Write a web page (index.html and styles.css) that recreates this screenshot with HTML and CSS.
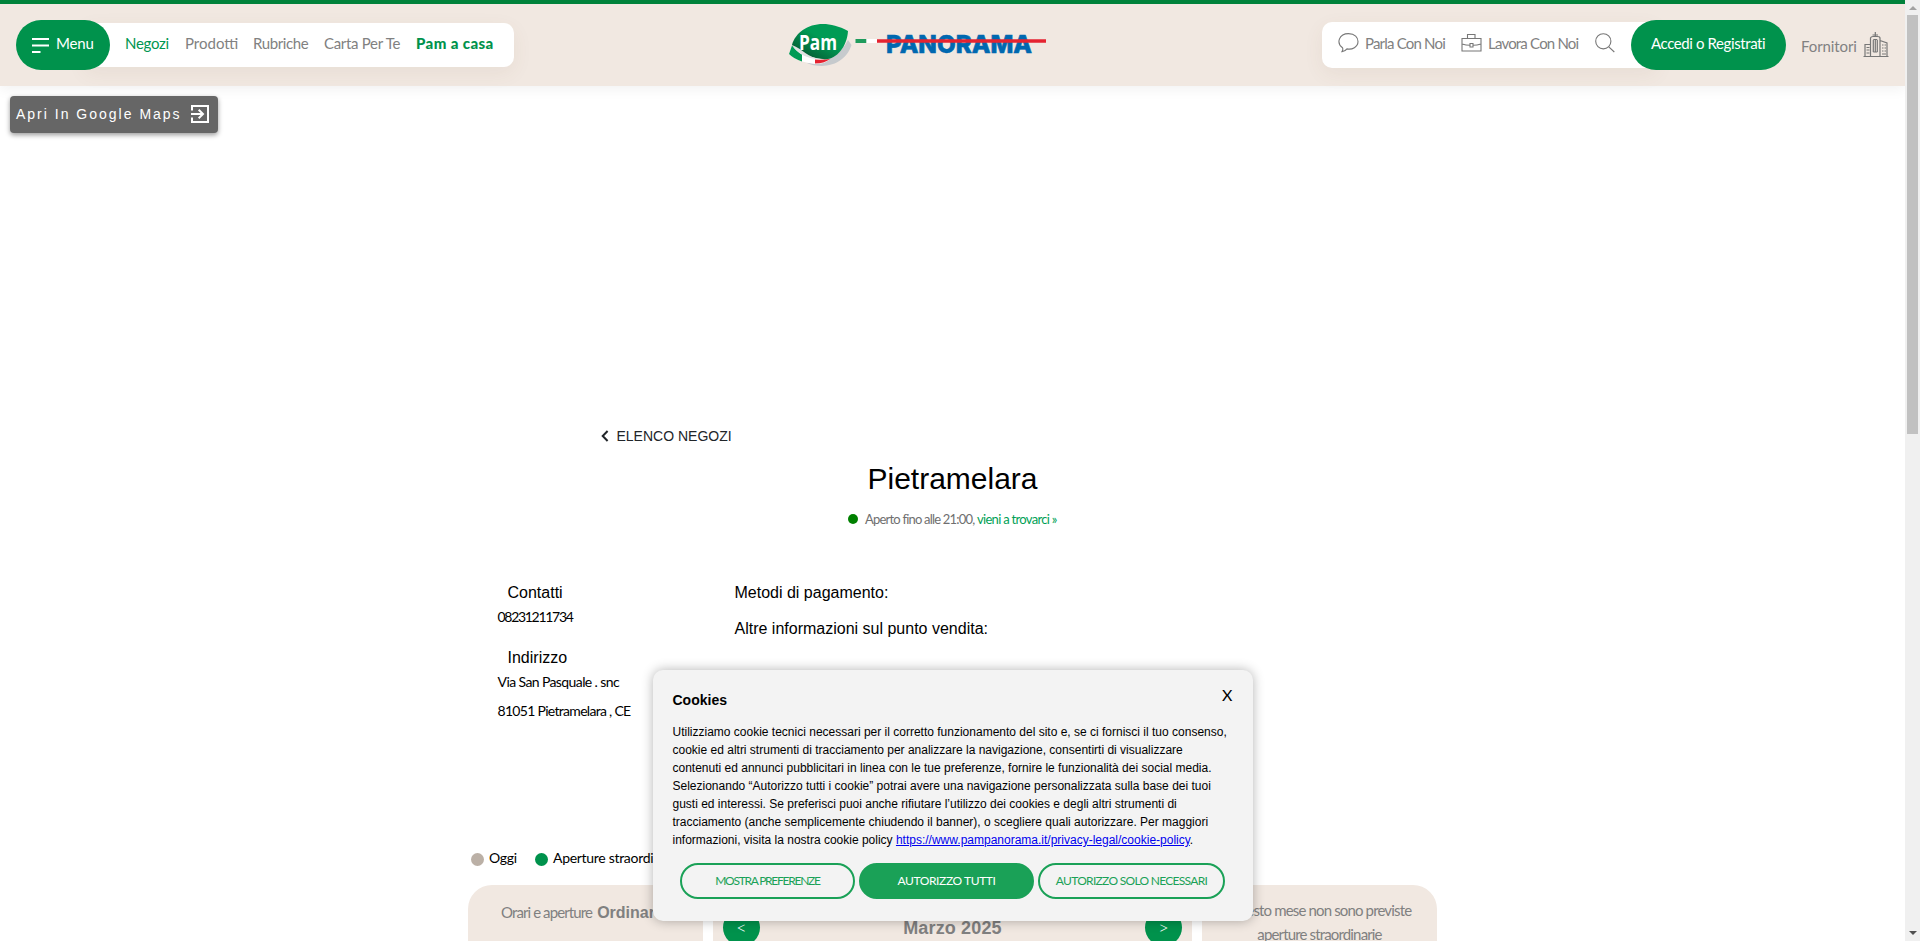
FILE: index.html
```html
<!DOCTYPE html>
<html lang="it">
<head>
<meta charset="utf-8">
<title>Pietramelara - Pam Panorama</title>
<link rel="stylesheet" href="styles.css">
</head>
<body>
<div class="page">
  <header class="header">
    <nav class="nav">
      <a class="pill pill-menu">
        <svg width="17" height="16" viewBox="0 0 17 16"><path d="M0 1h17M0 7.500h17M0 14h8.500" stroke="#fff" stroke-width="2"/></svg>
        <span class="t-menu">Menu</span>
      </a>
      <div class="nav-links">
        <a class="t-negozi">Negozi</a><a class="t-prodotti">Prodotti</a><a class="t-rubriche">Rubriche</a><a class="t-carta">Carta Per Te</a><a class="t-casa">Pam a casa</a>
      </div>
    </nav>
    <svg class="logo" width="260" height="48" viewBox="0 0 260 48">
      <defs>
        <linearGradient id="leaf" x1="1" y1="0" x2="0.100" y2="1"><stop offset="0.450" stop-color="#009b55"/><stop offset="0.800" stop-color="#046b3b"/><stop offset="1" stop-color="#03291a"/></linearGradient>
      </defs>
      <path d="M59 18L62.500 23C60 30 57 34 53 37C42 46 27 45 18 41C36 42 51 34 59 18Z" fill="#c6cacd"/>
      <path d="M0 32L3 24C14 33 27 38 40 38C36 41 31 42 26 42C16 41 7 38 0 32Z" fill="#fff"/>
      <path d="M0 32L3 23.500Q8 30 13 32.500V39.500Q5 37 0 32Z" fill="#009b55"/>
      <path d="M26 37.500Q34 38 41 37Q35 41.500 26 41.500Z" fill="#e52330"/>
      <path d="M3 23C8 5 32-6 59 9C58 26 46 39 34 37C21 36 10 31 3 23Z" fill="url(#leaf)"/>
      <path d="M3 23C14 27 19 36 32 37C20 38 9 32 3 23Z" fill="#dfe2e1"/>
      <text x="10" y="27.500" class="logo-pam" textLength="38" lengthAdjust="spacingAndGlyphs">Pam</text>
      <text x="97" y="30.500" class="logo-panorama" textLength="146" lengthAdjust="spacingAndGlyphs">PANORAMA</text>
      <path d="M66.500 19h11" stroke="#1f9b5c" stroke-width="4"/><path d="M77.500 19h10.500" stroke="#fff" stroke-width="4"/><path d="M88 19h169" stroke="#e52330" stroke-width="3.700"/>
    </svg>
    <div class="tools">
      <div class="tools-bar">
        <svg class="i-chat" width="21" height="20" viewBox="0 0 21 20"><path d="M4.500 14.800C-2 10 1 .6 10.500 .6C17 .6 20 4.500 20 8.500C20 14 14 17 9 15.900Q7 18.500 4 18.600Q5.300 16.500 4.500 14.800Z" class="line"/></svg>
        <a class="t-parla">Parla Con Noi</a>
        <svg class="i-case" width="21" height="18" viewBox="0 0 21 18"><path d="M1 4.500h19v12.500H1zM6.500 4.500v-4h7.500v4M1 10q4 1.200 8 1.200M12 11.200q4 0 8-1.200M9 9.500h3v3.500H9z" class="line"/></svg>
        <a class="t-lavora">Lavora Con Noi</a>
        <svg class="i-search" width="20" height="20" viewBox="0 0 20 20"><circle cx="8.300" cy="8.300" r="7.600" class="line"/><path d="M13.800 13.800L19.300 19" class="line"/></svg>
      </div>
      <a class="pill pill-login"><span class="t-accedi">Accedi o Registrati</span></a>
      <a class="t-fornitori">Fornitori</a>
      <svg class="i-city" width="26" height="26" viewBox="0 0 26 26"><g class="city"><path d="M.5 24.500h25M2 24V12.500h5.500M7.500 24V6Q8 4.500 10 4.500H14.500Q17 4.500 17 6V24M17 8.500L24 11V24M12.300 0v4M9.500 3h5.500"/><path d="M10.300 8v12M14.300 8v12M10.300 7.500h4M10.300 20h4M12.300 8v12M3.500 15.500h3M3.500 18h3M3.500 21h3M19 13h1.500M21.500 13h1.500M19 16h1.500M21.500 16h1.500M19 19h1.500M21.500 19h1.500M19 22h4"/></g></svg>
    </div>
  </header>

  <main class="main">
    <a class="maps"><span>Apri In Google Maps</span>
      <svg width="18" height="18" viewBox="0 0 18 18"><path d="M1 5.500V1h16v16H1V12.500M0 9h12M7.700 4.700L12 9L7.700 13.300" fill="none" stroke="#fff" stroke-width="2"/></svg>
    </a>
    <a class="back"><svg width="8" height="12" viewBox="0 0 8 12"><path d="M6.600 1L1.700 6L6.600 11" fill="none" stroke="#212529" stroke-width="2"/></svg><span>ELENCO NEGOZI</span></a>
    <h1>Pietramelara</h1>
    <p class="status"><i></i><span class="t-aperto">Aperto fino alle 21:00,</span><a class="t-vieni">vieni a trovarci »</a></p>
    <section class="info">
      <div class="contacts">
        <h2>Contatti</h2>
        <p class="t-phone">08231211734</p>
        <h2 class="addr">Indirizzo</h2>
        <p class="t-via">Via San Pasquale . snc</p>
        <p class="t-cap">81051 Pietramelara , CE</p>
      </div>
      <div class="details"><h2>Metodi di pagamento:</h2><h2>Altre informazioni sul punto vendita:</h2></div>
    </section>
    <div class="legend"><i class="today"></i><span class="t-oggi">Oggi</span><i class="extra"></i><span class="t-extra">Aperture straordinarie</span></div>
    <section class="cards">
      <div class="card hours"><span class="t-orari">Orari e aperture</span> <b>Ordinarie</b></div>
      <div class="card month"><a>&lt;</a><b>Marzo 2025</b><a>&gt;</a></div>
      <div class="card notes"><span class="t-questo">Questo mese non sono previste</span><span class="t-straord">aperture straordinarie</span></div>
    </section>
  </main>
</div>

<div class="scrollbar"><i class="up"></i><i class="thumb"></i><i class="down"></i></div>

<div class="cookies" role="dialog">
  <a class="close">X</a>
  <h3>Cookies</h3>
  <p>Utilizziamo cookie tecnici necessari per il corretto funzionamento del sito e, se ci fornisci il tuo consenso,<br>cookie ed altri strumenti di tracciamento per analizzare la navigazione, consentirti di visualizzare<br>contenuti ed annunci pubblicitari in linea con le tue preferenze, fornire le funzionalità dei social media.<br>Selezionando “Autorizzo tutti i cookie” potrai avere una navigazione personalizzata sulla base dei tuoi<br>gusti ed interessi. Se preferisci puoi anche rifiutare l’utilizzo dei cookies e degli altri strumenti di<br>tracciamento (anche semplicemente chiudendo il banner), o scegliere quali autorizzare. Per maggiori<br>informazioni, visita la nostra cookie policy <a class="policy">https://www.pampanorama.it/privacy-legal/cookie-policy</a>.</p>
  <div class="actions">
    <a class="btn"><span class="t-b1">MOSTRA PREFERENZE</span></a><a class="btn full"><span class="t-b2">AUTORIZZO TUTTI</span></a><a class="btn wide"><span class="t-b3">AUTORIZZO SOLO NECESSARI</span></a>
  </div>
</div>
</body>
</html>
```
FILE: styles.css
```css
* { box-sizing: border-box; }
body { margin: 0; display: flex; height: 941px; overflow: hidden; background: #fff; color: #000; font-family: "Liberation Sans", Arial, sans-serif; }
h1, h2, h3, p { margin: 0; font-weight: 400; }
svg { display: block; flex: none; }
i { display: block; flex: none; }
.page { width: 1905px; height: 941px; overflow: hidden; }

[class^="t-"] { font-family: Lato, "Open Sans", sans-serif; white-space: nowrap; flex: none; }

/* header */
.header { display: flex; height: 86px; padding: 16px 16px 0; border-top: 4px solid #00823b; background: #f1e8e1; box-shadow: 0 4px 12px rgba(0,0,0,.05); color: #818181; font-size: 15px; }
.nav { display: flex; width: 498px; height: 50px; align-items: center; flex: none; }
.pill { display: flex; align-items: center; height: 50px; border-radius: 25px; background: #00924c; color: #fff; flex: none; position: relative; z-index: 1; }
.pill-menu { width: 94px; padding-left: 16px; gap: 7px; }
.pill-menu svg { margin-top: 1px; }
.nav-links { display: flex; align-items: center; width: 429px; height: 44px; margin: -1px 0 0 -25px; padding: 0 0 3px 40px; border-radius: 0 10px 10px 0; background: #fff; box-shadow: 0 6px 20px rgba(120,80,50,.07); flex: none; }
.t-menu { margin-top: -4px; letter-spacing: -.2px; }
.t-negozi { width: 60px; color: #009650; letter-spacing: -.3px; }
.t-prodotti { width: 68px; }
.t-rubriche { width: 71px; letter-spacing: -.4px; }
.t-carta { width: 92px; letter-spacing: -.3px; }
.t-casa { color: #00924c; font-weight: 900; letter-spacing: .4px; }
.logo { margin: 2px 0 0 275px; }
.logo-pam { font: 700 21px "Open Sans", sans-serif; fill: #fff; }
.logo-panorama { font: 800 25px Inter, Lato, sans-serif; fill: #0068b0; stroke: #0068b0; stroke-width: .6; }
.tools { display: flex; width: 568px; margin-left: 273px; height: 50px; align-items: center; flex: none; }
.tools-bar { display: flex; align-items: center; width: 334px; height: 46px; margin: -1px -25px 0 0; padding: 0 0 3px 16px; border-radius: 10px 0 0 10px; background: #fff; box-shadow: 0 6px 20px rgba(120,80,50,.07); flex: none; }
.line { fill: none; stroke: #777; stroke-width: 1.100; }
.i-chat { margin-right: 6px; }
.t-parla { width: 96px; letter-spacing: -.8px; margin-top: -1px; }
.i-case { margin-right: 6px; }
.t-lavora { width: 107px; letter-spacing: -.8px; margin-top: -1px; }
.pill-login { width: 155px; padding-left: 20px; }
.t-accedi { margin-top: -4px; letter-spacing: -.4px; }
.t-fornitori { width: 62px; margin: 1px 0 0 15px; letter-spacing: -.1px; }
.city { fill: none; stroke: #777; stroke-width: 1.200; }

/* store */
.main { display: flex; flex-direction: column; align-items: center; height: 855px; padding-top: 10px; }
.main > * { flex: none; }
.maps { display: flex; align-items: center; align-self: flex-start; gap: 11px; width: 208px; height: 37px; margin-left: 10px; padding: 0 0 1px 6px; border-radius: 4px; background: #666; box-shadow: 0 2px 5px rgba(0,0,0,.4); color: #fff; font-size: 14px; letter-spacing: 2px; white-space: nowrap; }
.maps span { width: 164px; }
.back { display: flex; align-items: center; align-self: flex-start; gap: 7.500px; height: 20px; margin: 293px 0 0 601px; color: #212529; font-size: 14px; }
h1 { margin-top: 15px; font-size: 30px; line-height: 36px; }
.status { display: flex; align-items: center; width: 209px; height: 20px; margin-top: 12px; color: #6f6f6f; font-size: 13px; }
.status i { width: 10px; height: 10px; margin-right: 7px; border-radius: 50%; background: green; }
.t-aperto { width: 112px; letter-spacing: -.8px; }
.t-vieni { color: #009f55; letter-spacing: -.7px; }
.info { display: flex; width: 910px; height: 261px; margin-top: 52px; }
.contacts { width: 237px; }
h2 { font-size: 16px; line-height: 24px; }
.contacts h2 { padding-left: 10px; }
.contacts .addr { margin-top: 17px; }
.contacts p { height: 24px; font-size: 14px; line-height: 24px; }
.contacts .t-phone { letter-spacing: -1.300px; }
.contacts .t-via { letter-spacing: -.6px; }
.contacts .t-cap { margin-top: 5px; letter-spacing: -.7px; }
.details h2 { margin-bottom: 12px; }
.legend { display: flex; align-items: center; width: 963px; height: 24px; margin-top: 3px; font-size: 14px; }
.legend i { width: 13px; height: 13px; border-radius: 50%; background: #00924c; margin: 5px 5px 0 0; }
.legend .today { background: #bbb0a6; }
.t-oggi { width: 46px; letter-spacing: -.3px; }
.t-extra { letter-spacing: -.3px; }
.cards { display: flex; gap: 10px; width: 969px; height: 60px; margin-top: 16px; color: #808080; }
.card { height: 60px; background: #f1e8e1; flex: none; }
.hours { width: 235px; border-radius: 24px 0 0 0; padding: 18px 0 0 33px; font-size: 15px; white-space: nowrap; }
.hours b { font-size: 16px; }
.hours .t-orari { display: inline-block; width: 92px; letter-spacing: -.9px; }
.month { display: flex; justify-content: space-between; width: 479px; padding: 24px 10px 0; font-size: 18px; }
.month a { width: 37px; height: 37px; border-radius: 50%; background: #00924c; color: #fff; line-height: 37px; text-align: center; font-family: Lato, sans-serif; font-weight: 300; }
.month b { line-height: 39px; letter-spacing: .15px; }
.notes { display: flex; flex-direction: column; align-items: center; width: 235px; padding-top: 13px; border-radius: 0 24px 0 0; font-size: 15px; line-height: 24px; letter-spacing: -.85px; }

/* browser scrollbar */
.scrollbar { display: flex; flex-direction: column; align-items: center; width: 15px; height: 941px; padding: 6px 0; background: #f0f0f0; }
.up { border: 4px solid transparent; border-top: 0; border-bottom: 4px solid #a3a3a3; }
.thumb { width: 11px; height: 419px; margin: 5px 0 auto; background: #c1c1c1; }
.down { border: 4px solid transparent; border-bottom: 0; border-top: 4px solid #505050; }

/* cookie dialog */
.cookies { position: absolute; z-index: 5; left: 653px; top: 670px; width: 600px; height: 251px; padding: 21px 19.500px 0; border-radius: 10px; background: #f3f3f3; box-shadow: 0 0 12px rgba(0,0,0,.3); }
.close { position: absolute; right: 20.500px; top: 13px; font: 16px/24px Lato, sans-serif; }
.cookies h3 { font-size: 14px; font-weight: 700; line-height: 18px; }
.cookies p { margin-top: 14px; font-size: 12px; line-height: 18px; white-space: nowrap; }
.policy { color: #0000ee; text-decoration: underline; }
.actions { display: flex; gap: 4px; margin: 14px 0 0 7.500px; }
.btn { display: flex; align-items: center; justify-content: center; width: 175px; height: 36px; padding-bottom: 1px; border: 2px solid #1aa157; border-radius: 18px; color: #1aa157; font-size: 12px; }
.btn.full { background: #1aa157; color: #fff; }
.btn.wide { width: 187px; }
.t-b1 { letter-spacing: -1.250px; }
.t-b2 { letter-spacing: -.4px; }
.t-b3 { letter-spacing: -.7px; }
```
